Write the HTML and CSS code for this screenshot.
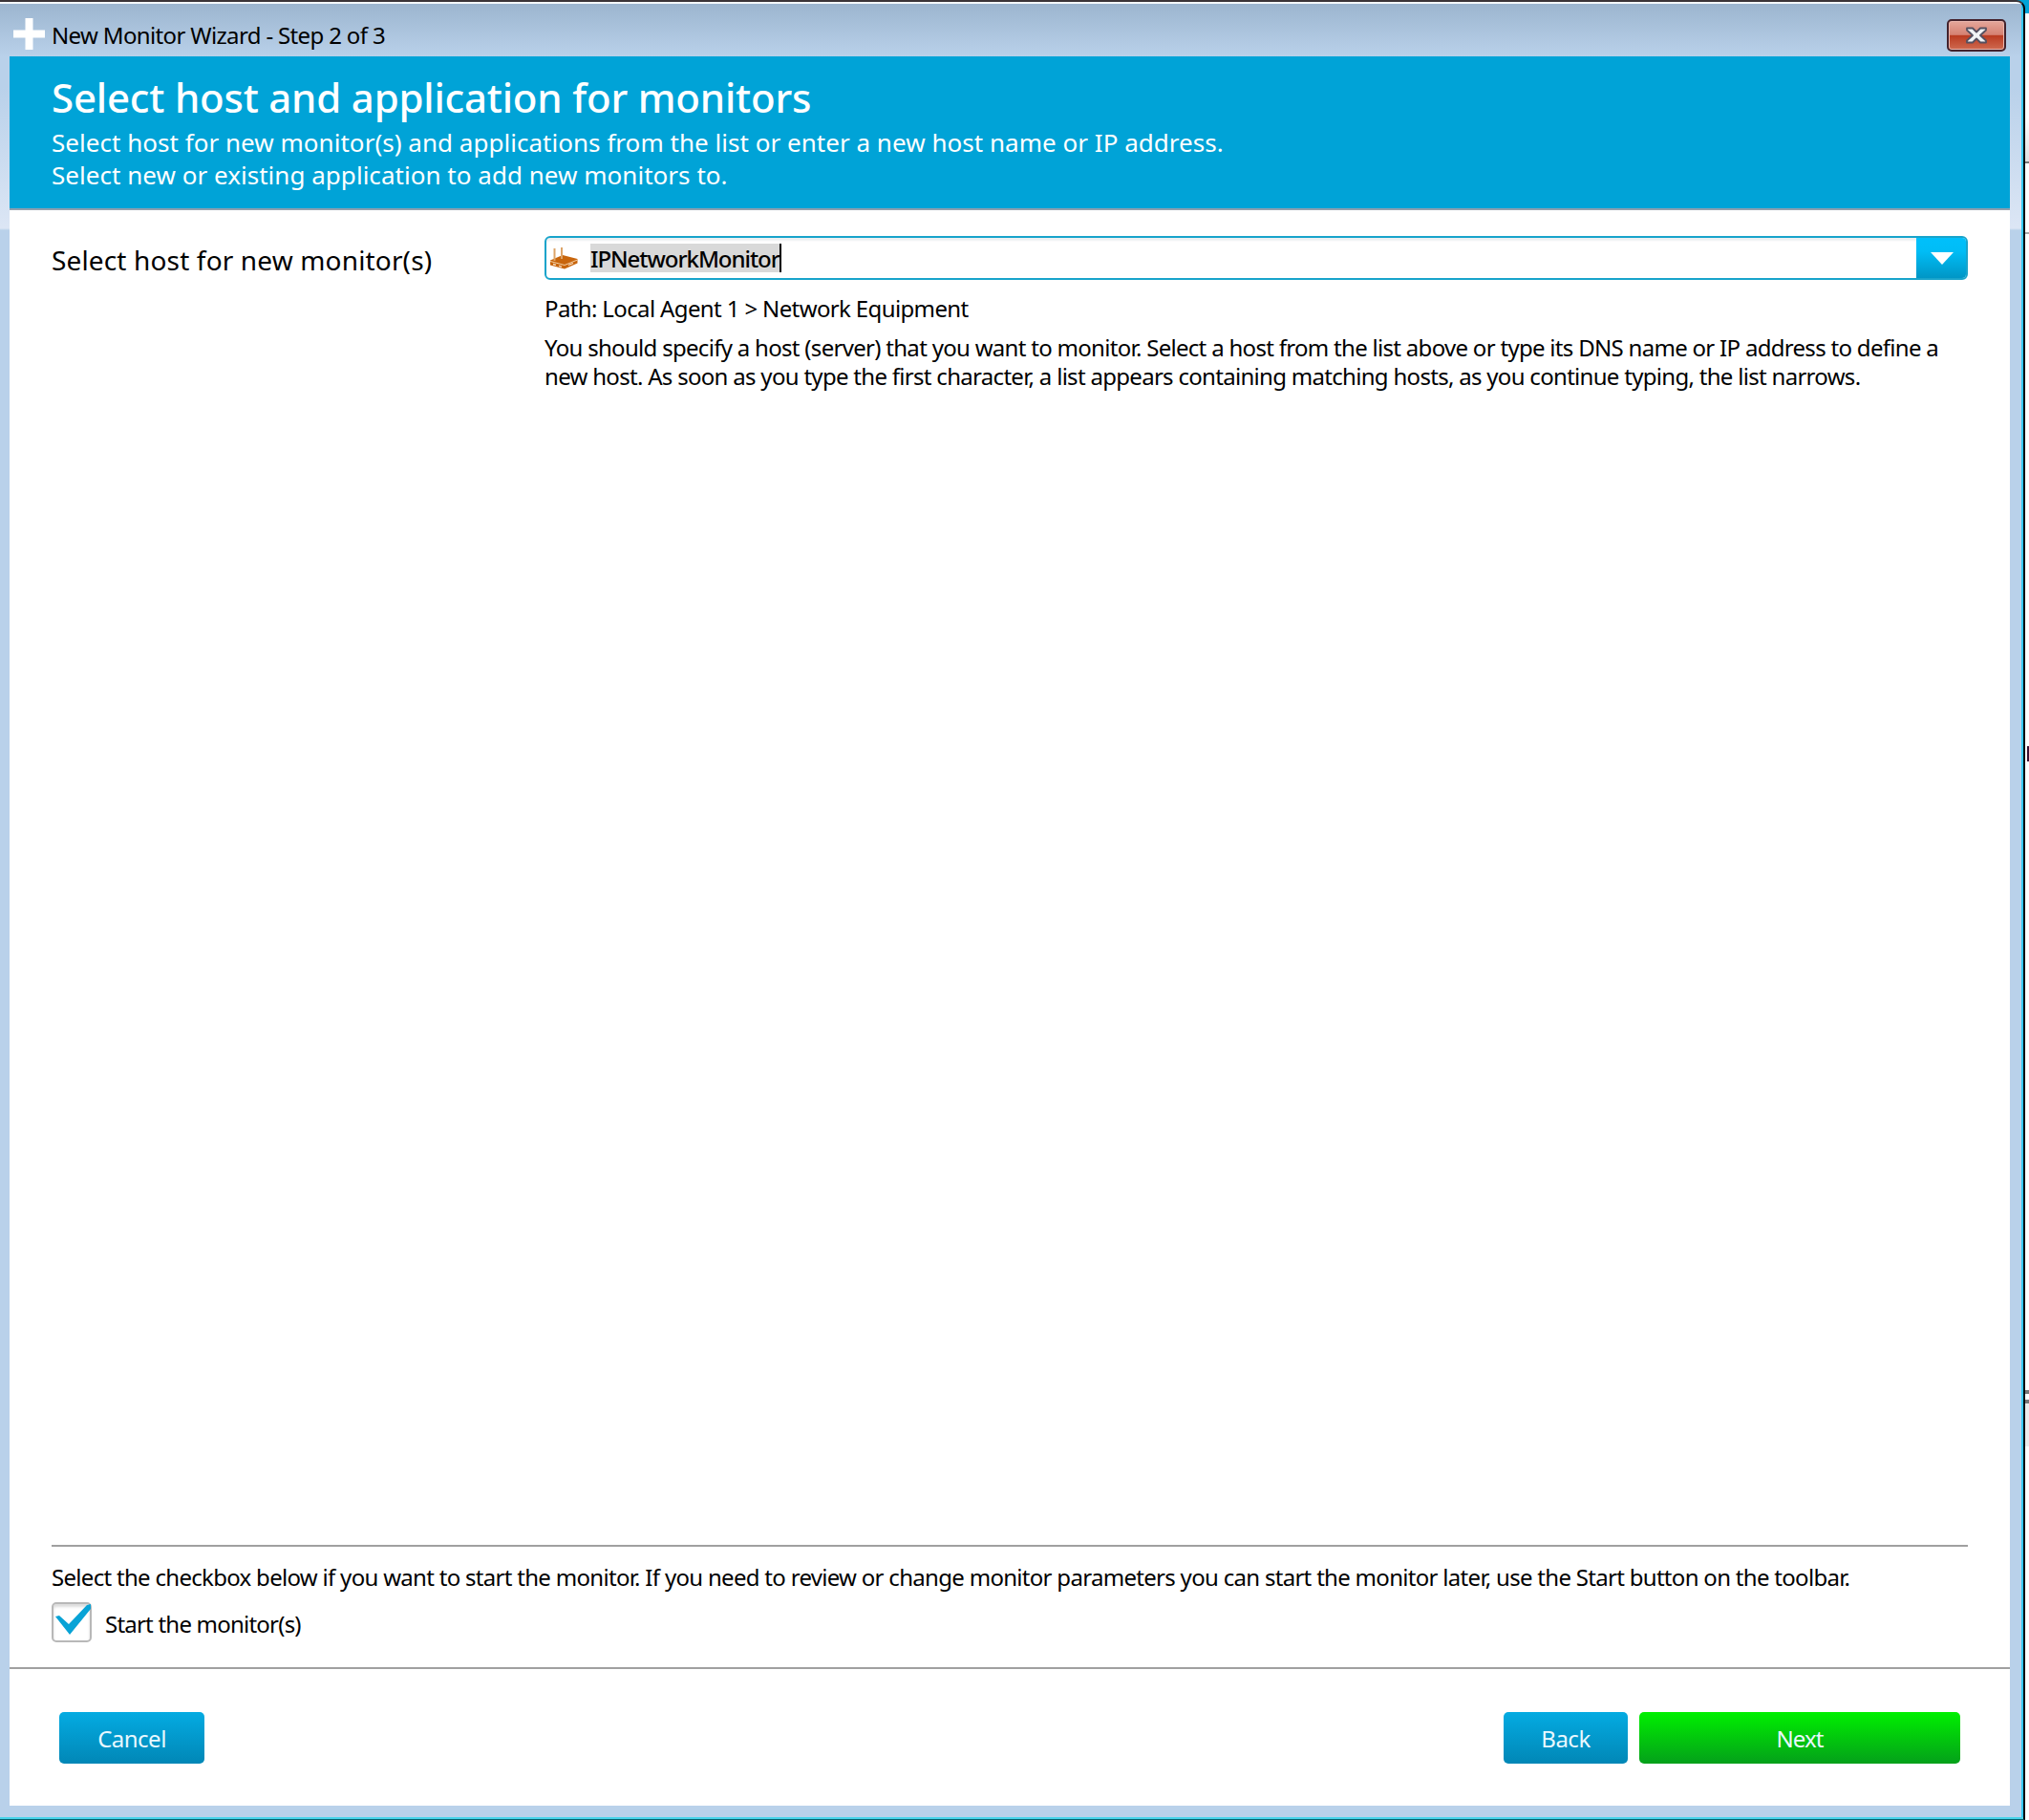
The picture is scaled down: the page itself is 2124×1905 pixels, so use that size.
FILE: index.html
```html
<!DOCTYPE html>
<html lang="en">
<head>
  <meta charset="UTF-8">
  <title>New Monitor Wizard</title>
  <link rel="stylesheet" href="styles.css">
</head>
<body>
  <div class="window">
    <div class="titlebar">
      <svg class="plus" width="33" height="33" viewBox="0 0 33 33"><path d="M12.500 0h8v12.500H33v8H20.500V33h-8V20.500H0v-8h12.500z" fill="#fff"/></svg>
      <span class="caption">New Monitor Wizard - Step 2 of 3</span>
      <button class="close" aria-label="Close">
        <svg width="24" height="18" viewBox="0 0 24 18"><path d="M2 1.500h6l4 4 4-4h6v2L16 9l6 5.500v2h-6l-4-4-4 4H2v-2L8 9 2 3.500z" fill="#f1f3f5" stroke="#555060" stroke-width="1.800" stroke-linejoin="round"/></svg>
      </button>
    </div>

    <div class="client">
      <header>
        <h1>Select host and application for monitors</h1>
        <p class="sub1">Select host for new monitor(s) and applications from the list or enter a new host name or IP address.</p>
        <p class="sub2">Select new or existing application to add new monitors to.</p>
      </header>

      <main>
        <label class="host-label">Select host for new monitor(s)</label>
        <div class="host">
          <div class="combo">
            <svg class="router" width="29" height="23" viewBox="0 0 29 23">
              <path d="M0 13.500L13 8l15.500 4v4.500L15 22.500 0 18.500z" fill="#c8650c"/>
              <path d="M4.500 1v13M12 0v12" stroke="#dda468" stroke-width="2" fill="none"/>
              <path d="M0 14.500l15 4 13.500-5.500" stroke="#f3cfa4" stroke-width="1" fill="none"/>
              <path d="M3 17.500l3 .800M9 19.300l3 .800M19 18.500l5-2" stroke="#fbe3c8" stroke-width="1.300"/>
            </svg>
            <span class="value">IPNetworkMonitor</span>
            <span class="drop"><svg width="24" height="13" viewBox="0 0 24 13"><path d="M0 0h24L12 13z" fill="#fff"/></svg></span>
          </div>
          <p class="path">Path: Local Agent 1 &gt; Network Equipment</p>
          <p class="hint">You should specify a host (server) that you want to monitor. Select a host from the list above or type its DNS name or IP address to define a<br>new host. As soon as you type the first character, a list appears containing matching hosts, as you continue typing, the list narrows.</p>
        </div>
      </main>

      <section class="start">
        <p class="start-text">Select the checkbox below if you want to start the monitor. If you need to review or change monitor parameters you can start the monitor later, use the Start button on the toolbar.</p>
        <div class="check-row">
          <span class="checkbox"><svg width="39" height="33" viewBox="0 0 39 33"><path d="M2 13l4-1 10 9L35 1l4-1v5L17 32z" fill="#08a3d6"/></svg></span>
          <span class="check-label">Start the monitor(s)</span>
        </div>
      </section>

      <footer>
        <button class="btn cancel">Cancel</button>
        <button class="btn back">Back</button>
        <button class="btn next">Next</button>
      </footer>
    </div>
  </div>

  <!-- sliver of the window behind -->
  <div class="behind">
    <div class="behind-top"></div>
    <div class="behind-head"></div>
    <div class="behind-row"></div>
    <div class="behind-body"></div>
    <div class="behind-mark"></div>
    <div class="behind-list"></div>
    <div class="behind-split"></div>
    <div class="behind-foot"></div>
  </div>
</body>
</html>
```

FILE: styles.css
```css
* {
  box-sizing: border-box;
}

body {
  margin: 0;
  width: 2124px;
  height: 1905px;
  display: flex;
  overflow: hidden;
  background: #00a3d7;
  font-family: "Noto Sans", "Open Sans", sans-serif;
  font-size: 24px;
  letter-spacing: -0.7px;
  color: #000;
  white-space: nowrap;
}

h1, p {
  margin: 0;
  font-weight: normal;
}

.window {
  width: 2120px;
  height: 1905px;
  padding: 0 12px 0 10px;
  border-top: 2px solid #3b3438;
  border-right: 2px solid #04080c;
  border-bottom: 1px solid #08626e;
  border-top-right-radius: 9px;
  background:
    linear-gradient(#f4f8fc, #f4f8fc) 0 0 / 100% 2px no-repeat,
    linear-gradient(#48d4ea, #48d4ea) 0 100% / 100% 2px no-repeat,
    linear-gradient(#35c8f4, #35c8f4) 100% 0 / 2px 100% no-repeat,
    linear-gradient(#9bb4ce, #b9d1ea 57px, #b9d1ea 90px, #dce6f5 237px, #b9d1ea 239px, #b9d1ea);
}

.titlebar {
  height: 57px;
  display: flex;
  align-items: center;
  padding-left: 4px;
}

.plus {
  margin-top: 9px;
}

.caption {
  margin: 11px 0 0 7px;
  letter-spacing: -0.65px;
}

.close {
  width: 62px;
  height: 34px;
  margin: 12px 6px 0 auto;
  padding: 0;
  display: flex;
  align-items: center;
  justify-content: center;
  border: 2px solid #43222c;
  border-radius: 5px;
  background: linear-gradient(#e5a79b, #d58172 48%, #b93a20 50%, #cf6a50);
  box-shadow: inset 0 0 0 1px #eab5ac;
}

.client {
  width: 2094px;
  height: 1831px;
  display: flex;
  flex-direction: column;
  background: #fff;
}

header {
  height: 161px;
  padding: 17px 0 0 44px;
  background: #00a3d7;
  border-bottom: 2px solid #909fae;
  color: #fff;
}

h1 {
  font-size: 42px;
  font-weight: 500;
  line-height: 52px;
  letter-spacing: -0.2px;
}

.sub1, .sub2 {
  font-size: 26px;
  line-height: 34px;
  margin-top: 4px;
  letter-spacing: 0.03px;
}

.sub2 {
  margin-top: 0;
}

main {
  flex: 1;
  display: flex;
  padding: 27px 44px 0;
}

.host-label {
  width: 516px;
  font-size: 28px;
  line-height: 50px;
  letter-spacing: 0.15px;
}

.host {
  width: 1490px;
}

.combo {
  height: 46px;
  display: flex;
  align-items: center;
  padding-left: 4px;
  border: 2px solid #18a4cb;
  border-radius: 6px;
  box-shadow: inset 0 3px 2px #eef0f2;
  overflow: hidden;
}

.value {
  height: 30px;
  line-height: 31px;
  margin-left: 13px;
  background: #d9d9d9;
  border-right: 2px solid #000;
  font-weight: 500;
  letter-spacing: -1.05px;
}

.drop {
  width: 54px;
  height: 46px;
  margin: -2px -2px -2px auto;
  display: flex;
  align-items: center;
  justify-content: center;
  background: linear-gradient(#00c0fc, #00bdf6 35%, #0093c2);
}

.path {
  margin-top: 13px;
  line-height: 34px;
  letter-spacing: -0.63px;
}

.hint {
  margin-top: 9px;
  line-height: 30px;
}

.start {
  height: 128px;
  margin: 0 44px;
  padding-top: 15px;
  border-top: 2px solid #a0a0a0;
}

.start-text {
  line-height: 34px;
}

.check-row {
  display: flex;
  align-items: center;
  margin-top: 9px;
}

.checkbox {
  width: 42px;
  height: 42px;
  border: 2px solid #b8b8b8;
  border-radius: 5px;
  box-shadow: inset 0 3px 3px #dcdcdc;
}

.checkbox svg {
  display: block;
}

.check-label {
  margin: 3px 0 0 14px;
  letter-spacing: -0.78px;
}

footer {
  height: 145px;
  display: flex;
  padding: 45px 52px 0;
  border-top: 2px solid #a0a0a0;
}

.btn {
  height: 54px;
  padding: 0;
  border: 0;
  border-radius: 5px;
  background: linear-gradient(#04abe2, #0187b6);
  color: #e8f8ff;
  font: 24px "Noto Sans", sans-serif;
  letter-spacing: -0.5px;
}

.cancel {
  width: 152px;
  margin-right: auto;
}

.back {
  width: 130px;
}

.next {
  width: 336px;
  margin-left: 12px;
  background: linear-gradient(#00f000, #04a01a);
  letter-spacing: -0.9px;
}

.behind {
  width: 4px;
  background: #fff;
}

.behind-top {
  height: 14px;
  background: #00a3d7;
}

.behind-head {
  height: 157px;
  background: linear-gradient(#fff 70%, #e0e0e0);
  border-bottom: 2px solid #777;
}

.behind-row {
  height: 74px;
  border-bottom: 2px solid #aaa;
}

.behind-body {
  height: 536px;
}

.behind-mark {
  height: 16px;
  margin-left: 2px;
  background: #3a1030;
}

.behind-list {
  height: 658px;
}

.behind-split {
  height: 14px;
  border-top: 4px solid #777;
  border-bottom: 4px solid #777;
}

.behind-foot {
  height: 45px;
  background: #ececec;
}
```
